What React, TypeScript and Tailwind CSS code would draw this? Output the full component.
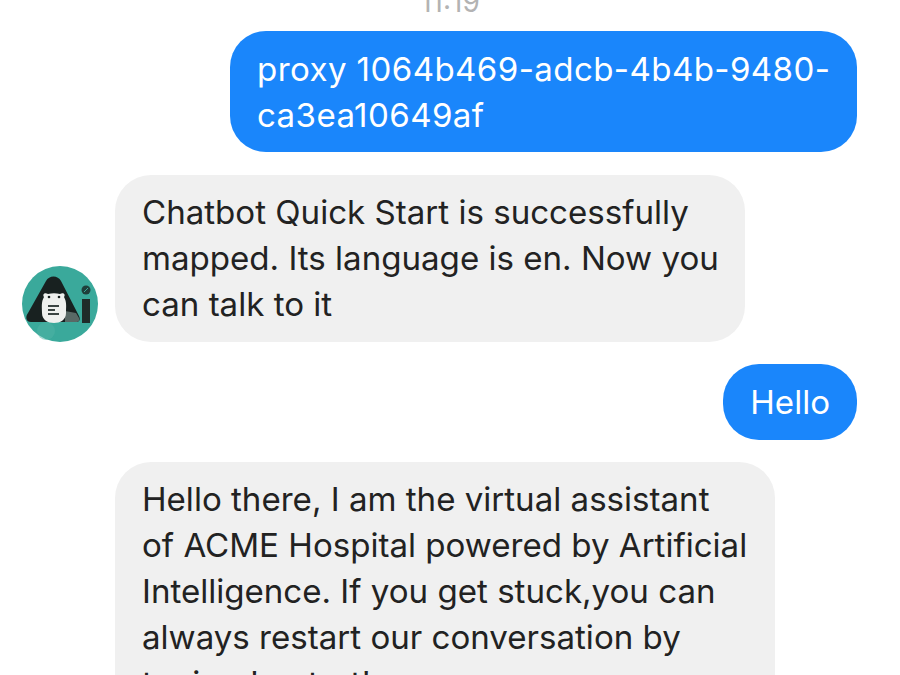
import React from 'react';

const Avatar: React.FC = () => (
  <svg className="h-[76px] w-[76px] shrink-0" viewBox="0 0 76 76">
    <circle cx="38" cy="38" r="38" fill="#3aa99b" />
    <circle cx="24" cy="65" r="9" fill="#4fb3a6" opacity="0.5" />
    <path d="M24 15 C27 9 36 9 39 15 L57 50 C59 54 57 56 54 56 L9 56 C4 56 3 51 6 47 Z" fill="#182120" />
    <path d="M43 45 L54 47 L57 52 C58 55 56 56 54 56 L43 56 Z" fill="#8fa6a1" opacity="0.55" />
    <path d="M22 31 C20 28 23 26 26 28 C30 27 34 27 38 28 C41 26 44 28 42 31 C45 36 44 41 44 47 C44 54 38 57 32 57 C26 57 20 54 20 47 C20 41 19 36 22 31 Z" fill="#eef0ee" />
    <circle cx="27" cy="31" r="1.3" fill="#182120" />
    <circle cx="37" cy="31" r="1.3" fill="#182120" />
    <path d="M26 39 H37 V41 H26 Z M26 43 H33 V45 H26 Z M26 47 H37 V49 H26 Z" fill="#3a4442" />
    <circle cx="64" cy="24" r="4.5" fill="#1f3f3b" />
    <path d="M62 26 L66 22" stroke="#3aa99b" strokeWidth="1" />
    <rect x="60" y="33" width="8" height="24" fill="#1f2b29" />
  </svg>
);

const Sent: React.FC<{ className: string; children: React.ReactNode }> = ({ className, children }) => (
  <div className={`whitespace-nowrap rounded-[36px] bg-[#1a86fb] px-[27px] text-white ${className}`}>{children}</div>
);

const Received: React.FC<{ className: string; children: React.ReactNode }> = ({ className, children }) => (
  <div className={`rounded-[36px] bg-[#f0f0f0] pl-[27px] text-[#222222] ${className}`}>{children}</div>
);

export default function App() {
  return (
    <div className="h-[675px] w-[900px] overflow-hidden bg-white font-['Inter','Noto_Sans',sans-serif] text-[33.1px] leading-[46px]">
      <div className="flex h-[31px] items-end justify-center overflow-hidden">
        <span className="mb-[16px] text-[28px] leading-[26px] text-[#b3b3b3]">11:19</span>
      </div>

      <div className="flex flex-col gap-[22px] pr-[43px]">
        <div className="flex justify-end">
          <Sent className="w-[627px] pb-[14px] pt-[15px] tracking-[0.4px]">
            proxy 1064b469-adcb-4b4b-9480-
            <br />
            ca3ea10649af
          </Sent>
        </div>

        <div className="mt-px flex items-end gap-[17px] pl-[22px]">
          <Avatar />
          <Received className="w-[630px] py-[14px] pb-[15px]">
            Chatbot Quick Start is successfully
            <br />
            mapped. Its language is en. Now you
            <br />
            can talk to it
          </Received>
        </div>

        <div className="flex justify-end">
          <Sent className="py-[15px]">Hello</Sent>
        </div>

        <div className="pl-[115px]">
          <Received className="w-[660px] py-[14px]">
            Hello there, I am the virtual assistant
            <br />
            of ACME Hospital powered by Artificial
            <br />
            Intelligence. If you get stuck,you can
            <br />
            always restart our conversation by
            <br />
            typing 'restart'
          </Received>
        </div>
      </div>
    </div>
  );
}
